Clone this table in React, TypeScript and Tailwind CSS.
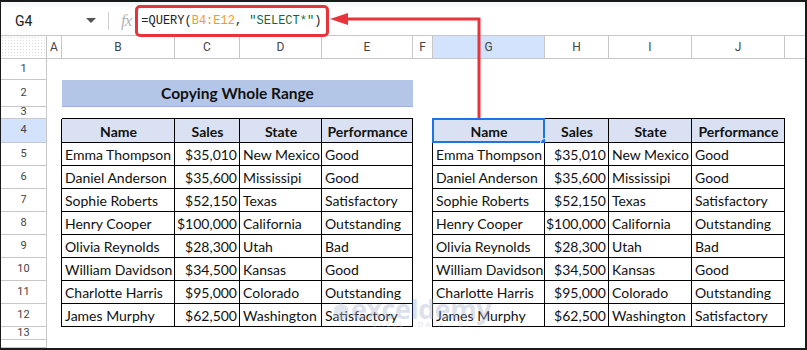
import React from "react";

const data = [
  ["Emma Thompson", "$35,010", "New Mexico", "Good"],
  ["Daniel Anderson", "$35,600", "Mississipi", "Good"],
  ["Sophie Roberts", "$52,150", "Texas", "Satisfactory"],
  ["Henry Cooper", "$100,000", "California", "Outstanding"],
  ["Olivia Reynolds", "$28,300", "Utah", "Bad"],
  ["William Davidson", "$34,500", "Kansas", "Good"],
  ["Charlotte Harris", "$95,000", "Colorado", "Outstanding"],
  ["James Murphy", "$62,500", "Washington", "Satisfactory"],
];

const leftW = ["w-[113px]", "w-[65px]", "w-[82px]", "w-[91px]"];
const rightW = ["w-[112px]", "w-[64px]", "w-[83px]", "w-[93px]"];
const heads = ["Name", "Sales", "State", "Performance"];

const cellFont = "font-['Lato','Liberation_Sans',sans-serif] text-[14px] text-[#111]";

function RowNum({ n, active }: { n: number | string; active?: boolean }) {
  return (
    <div
      className={`w-[46px] shrink-0 border-r border-b border-[#c7c7c7] flex items-center justify-center text-[11px] text-[#444] font-['Roboto','Liberation_Sans',sans-serif] ${
        active ? "bg-[#d3e3fd]" : "bg-white"
      }`}
    >
      {n}
    </div>
  );
}

function TableCells({ widths, cells, header, selected }: { widths: string[]; cells: string[]; header?: boolean; selected?: boolean }) {
  return (
    <>
      {cells.map((c, i) => {
        const align = header ? "justify-center font-bold" : i === 1 ? "justify-end" : "justify-start";
        return (
          <div
            key={i}
            className={`${widths[i]} shrink-0 relative border-r border-b border-black flex items-center pl-[3px] pr-[2px] pt-[1px] whitespace-nowrap ${align} ${
              header ? "bg-[#d9e1f2]" : "bg-white"
            } ${cellFont}`}
          >
            {c}
            {selected && i === 0 && (
              <>
                <div className="absolute left-[-1px] top-[-1px] right-[-1px] bottom-[-1px] border-2 border-[#1a73e8]" />
                <div className="absolute right-[-5px] bottom-[-5px] w-[9px] h-[9px] rounded-full bg-[#1a73e8] border border-white" />
              </>
            )}
          </div>
        );
      })}
    </>
  );
}

function DataRow({ n, cells, header }: { n: number; cells: string[]; header?: boolean }) {
  return (
    <div className={`flex ${header ? "h-[24px]" : "h-[23px]"}`}>
      <RowNum n={n} active={header} />
      <div className="w-[15px] shrink-0 border-r border-black" />
      <TableCells widths={leftW} cells={cells} header={header} />
      <div className="w-[20px] shrink-0 border-r border-black" />
      <TableCells widths={rightW} cells={cells} header={header} selected={header} />
      <div className="flex-1" />
    </div>
  );
}

export default function App() {
  const colHeads: [string, string, boolean?][] = [
    ["A", "w-[15px]"],
    ["B", "w-[113px]"],
    ["C", "w-[65px]"],
    ["D", "w-[82px]"],
    ["E", "w-[91px]"],
    ["F", "w-[20px]"],
    ["G", "w-[112px]", true],
    ["H", "w-[64px]"],
    ["I", "w-[83px]"],
    ["J", "w-[93px]"],
  ];
  return (
    <div className="relative w-[807px] h-[350px] overflow-hidden bg-white border-t-2 border-l border-r-2 border-b-2 border-[#1a1a1a] flex flex-col">
      {/* top strip */}
      <div className="h-[5px] bg-[#f8f9fa] shrink-0" />
      {/* formula bar */}
      <div className="h-[28px] shrink-0 flex items-center bg-white font-['Roboto','Liberation_Sans',sans-serif]">
        <div className="w-[80px] pl-[14px] text-[14px] text-[#202124]">G4</div>
        <svg width="10" height="6" viewBox="0 0 10 6" className="ml-[5px]">
          <path d="M0 0 L10 0 L5 5 Z" fill="#555" />
        </svg>
        <div className="ml-[12px] w-px h-[18px] bg-[#d0d0d0]" />
        <div className="ml-[12px] text-[17px] italic text-[#b5b5b5] font-['Liberation_Serif',serif] tracking-[-1px]">fx</div>
        <div className="ml-[10px] text-[12px] font-['Liberation_Mono',monospace] text-[#202124] whitespace-pre leading-none">
          =QUERY(<span className="text-[#f29b24]">B4:E12</span>, <span className="text-[#0b6e38]">"SELECT*"</span>)
        </div>
      </div>
      {/* column headers */}
      <div className="h-[24px] shrink-0 flex border-t border-b border-[#c7c7c7] font-['Roboto','Liberation_Sans',sans-serif] text-[12px] text-[#444]">
        <div className="w-[46px] shrink-0 border-r border-[#c7c7c7] bg-[radial-gradient(#dcdcdc_0.8px,transparent_0.8px)] bg-[length:3px_3px]" />
        {colHeads.map(([l, w, act]) => (
          <div
            key={l}
            className={`${w} shrink-0 border-r border-[#c7c7c7] flex items-center justify-center ${act ? "bg-[#d3e3fd]" : "bg-white"}`}
          >
            {l}
          </div>
        ))}
        <div className="flex-1" />
      </div>
      {/* row 1 */}
      <div className="flex h-[21px] shrink-0">
        <RowNum n={1} />
      </div>
      {/* row 2 */}
      <div className="flex h-[27px] shrink-0">
        <RowNum n={2} />
        <div className="w-[15px] shrink-0" />
        <div className="w-[351px] shrink-0 bg-[#b4c6e7] border-b border-[#9db3dc] flex items-center justify-center pt-[1px] font-['Lato','Liberation_Sans',sans-serif] font-bold text-[15.5px] text-[#111]">
          Copying Whole Range
        </div>
      </div>
      {/* row 3 */}
      <div className="flex h-[12px] shrink-0">
        <RowNum n={3} />
        <div className="w-[15px] shrink-0" />
        <div className="w-[351px] shrink-0 border-b border-black" />
        <div className="w-[20px] shrink-0" />
        <div className="w-[352px] shrink-0 border-b border-black" />
      </div>
      <DataRow n={4} cells={heads} header />
      {data.map((r, i) => (
        <DataRow key={i} n={i + 5} cells={r} />
      ))}
      <div className="flex h-[13px] shrink-0">
        <RowNum n={13} />
      </div>
      <div className="flex flex-1">
        <RowNum n="" />
      </div>

      {/* annotation: red box */}
      <div className="absolute left-[134px] top-[3px] w-[194px] h-[32px] border-[3px] border-[#e8333a] rounded-[5px]" />
      {/* annotation: arrow */}
      <svg className="absolute left-0 top-0" width="807" height="350">
        <path d="M478 116 L478 17 L344 17" fill="none" stroke="#e8333a" strokeWidth="3" />
        <path d="M329 17 L347 11 L347 23 Z" fill="#e8333a" />
      </svg>
      {/* watermark */}
      <div className="absolute left-[332px] top-[293px] flex items-center opacity-40 pointer-events-none">
        <svg width="16" height="20" viewBox="0 0 18 22">
          <path d="M9 1 L17 6 L17 16 L9 21 L1 16 L1 6 Z" fill="#b8c2d6" />
        </svg>
        <div className="ml-[2px] flex flex-col items-center leading-none">
          <span className="text-[27px] font-bold text-[#a9b6cf] font-['Open_Sans',sans-serif] tracking-[-0.5px]">exceldemy</span>
          <span className="text-[8px] text-[#b5bdcc] tracking-[2px] font-['Open_Sans',sans-serif] -mt-[2px]">EXCEL · DATA · BI</span>
        </div>
      </div>
    </div>
  );
}
